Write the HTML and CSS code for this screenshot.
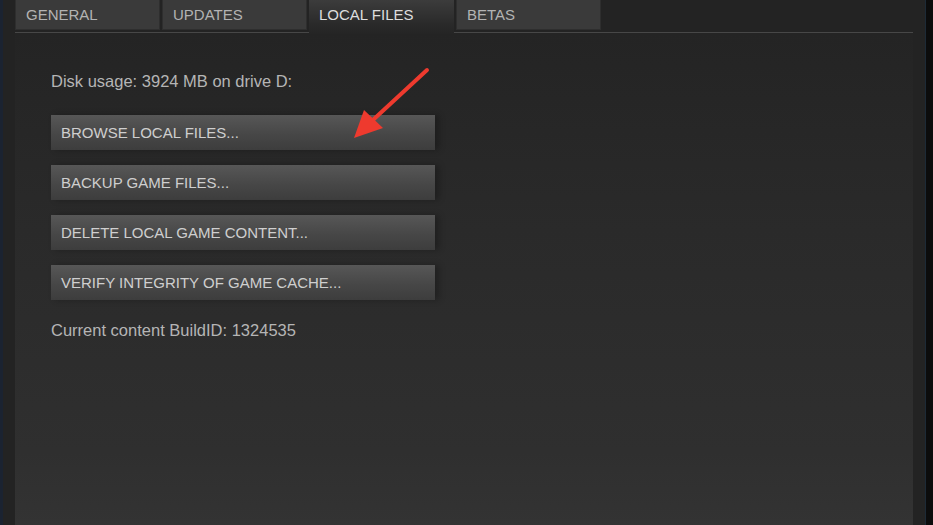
FILE: index.html
```html
<!DOCTYPE html>
<html lang="en">
<head>
    <meta charset="UTF-8">
    <title>Properties - Local Files</title>
    <link rel="stylesheet" href="styles.css">
</head>
<body>
    <div class="frame">
        <div class="window">
            <div class="tabs">
                <div class="tab">GENERAL</div>
                <div class="tab">UPDATES</div>
                <div class="tab active">LOCAL FILES</div>
                <div class="tab">BETAS</div>
            </div>
            <div class="panel">
                <p class="info-text">Disk usage: 3924 MB on drive D:</p>
                <div class="actions">
                    <button class="action-button">BROWSE LOCAL FILES...</button>
                    <button class="action-button">BACKUP GAME FILES...</button>
                    <button class="action-button">DELETE LOCAL GAME CONTENT...</button>
                    <button class="action-button">VERIFY INTEGRITY OF GAME CACHE...</button>
                </div>
                <p class="info-text build">Current content BuildID: 1324535</p>
            </div>
        </div>

        <!-- annotation arrow -->
        <svg class="arrow" width="933" height="525" viewBox="0 0 933 525">
            <line x1="427" y1="70" x2="374" y2="119" stroke="#ee3a2e" stroke-width="4" stroke-linecap="round"/>
            <polygon points="354,138 364,110 383,128" fill="#ee3a2e"/>
        </svg>
    </div>
</body>
</html>
```

FILE: styles.css
```css
body {
    margin: 0;
    background: #0c0c0c;
    font-family: "Liberation Sans", Arial, sans-serif;
    overflow: hidden;
}
.frame {
    position: relative;
    width: 923px;
    height: 525px;
    background: #232323;
    border-left: 3px solid #1b2331;
    border-right: 1px solid #1d2a36;
    padding: 0 12px 0 12px;
    box-sizing: content-box;
    width: 898px;
}
.window {
    display: flex;
    flex-direction: column;
    height: 100%;
}
.tabs {
    display: flex;
    gap: 2px;
    height: 33px;
    border-bottom: 2px solid #474747;
    box-sizing: border-box;
    height: 34px;
}
.tab {
    width: 145px;
    height: 30px;
    line-height: 30px;
    padding-left: 10px;
    box-sizing: border-box;
    background: #3a3a3a;
    border: 1px solid #2e2e2e;
    border-top: none;
    color: #b3b3b3;
    font-size: 15px;
}
.tab.active {
    height: 34px;
    background: linear-gradient(#3c3c3c, #2a2a2a 70%, #252525);
    border: none;
    color: #dedede;
    position: relative;
    z-index: 1;
}
.panel {
    flex: 1;
    margin-top: -1px;
    padding: 38px 0 0 36px;
    background: linear-gradient(#242424, #2a2a2a 40%, #2f2f2f 85%, #333333);
}
.info-text {
    margin: 0;
    font-size: 16.5px;
    line-height: 20px;
    color: #b5b5b5;
}
.actions {
    display: flex;
    flex-direction: column;
    gap: 15px;
    margin-top: 24px;
    width: 384px;
}
.action-button {
    height: 35px;
    border: none;
    padding: 0 0 0 10px;
    text-align: left;
    font-family: "Liberation Sans", Arial, sans-serif;
    font-size: 15px;
    line-height: 35px;
    color: #cfcfcf;
    background: linear-gradient(#575757, #474747 55%, #3d3d3d);
    box-shadow: 4px 0 6px rgba(0,0,0,0.25);
    cursor: pointer;
}
.build {
    margin-top: 20px;
}
.arrow {
    position: absolute;
    left: -3px;
    top: 0;
    pointer-events: none;
}
```
